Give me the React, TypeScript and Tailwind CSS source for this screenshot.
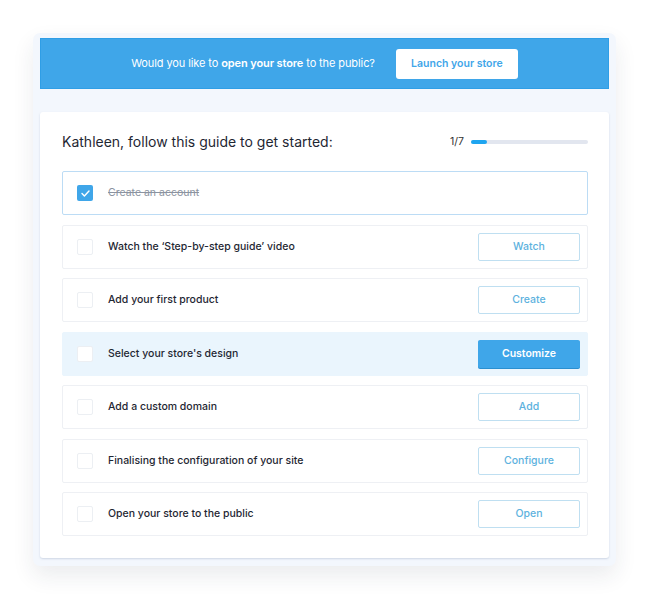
import React from "react";

const rows = [
  { label: "Create an account", done: true },
  { label: "Watch the ‘Step-by-step guide’ video", btn: "Watch" },
  { label: "Add your first product", btn: "Create" },
  { label: "Select your store's design", btn: "Customize", active: true },
  { label: "Add a custom domain", btn: "Add" },
  { label: "Finalising the configuration of your site", btn: "Configure" },
  { label: "Open your store to the public", btn: "Open" },
];

export default function App() {
  return (
    <div className="min-h-[599px] bg-white pt-[33px] pl-[33px]" style={{ fontFamily: "Inter, 'Open Sans', sans-serif" }}>
      <div className="w-[583px] rounded-[7px] bg-[#f3f7fd] px-[7px] pt-[5px] pb-[8px] shadow-[0_10px_22px_rgba(30,40,70,0.09)]">
        <div className="flex h-[51px] items-center justify-center gap-[21px] border border-[#2f9ee6] bg-[#3fa6e9]">
          <p className="text-[11px] tracking-[-0.1px] text-white">
            Would you like to <span className="font-semibold">open your store</span> to the public?
          </p>
          <button className="h-[30px] w-[122px] rounded-[3px] bg-white text-[10.5px] font-semibold text-[#3fa6e9]">
            Launch your store
          </button>
        </div>
        <div className="mt-[23px] rounded-[3px] bg-white pl-[22px] pr-[21px] pb-[22px] shadow-[0_1px_2px_rgba(100,120,160,0.25)]">
          <div className="flex h-[59px] items-center justify-between">
            <h1 className="text-[14px] text-[#1f2733]">Kathleen, follow this guide to get started:</h1>
            <div className="flex items-center gap-[7px]">
              <span className="text-[10.5px] text-[#333]">1/7</span>
              <div className="h-[4px] w-[117px] rounded-full bg-[#e2e6ef]">
                <div className="h-[4px] w-[16px] rounded-full bg-[#1ea5f0]" />
              </div>
            </div>
          </div>
          <div className="flex flex-col gap-[9.5px]">
            {rows.map((r) => (
              <div
                key={r.label}
                className={
                  "flex h-[44px] items-center rounded-[2px] border pl-[14px] pr-[7px] " +
                  (r.done
                    ? "border-[#bcdcf5] bg-white"
                    : r.active
                    ? "border-[#eaf5fd] bg-[#eaf5fd]"
                    : "border-[#eef0f4] bg-white")
                }
              >
                {r.done ? (
                  <div className="flex h-[16px] w-[16px] items-center justify-center rounded-[2px] bg-[#3fa6e9]">
                    <svg width="9" height="7" viewBox="0 0 9 7" fill="none">
                      <path d="M1 3.6 L3.4 6 L8 1" stroke="white" strokeWidth="1.4" strokeLinecap="round" strokeLinejoin="round" />
                    </svg>
                  </div>
                ) : (
                  <div className="h-[16px] w-[16px] rounded-[2px] border border-[#eceff3] bg-white" />
                )}
                <span
                  className={
                    "ml-[15px] flex-1 text-[10.5px] " +
                    (r.done ? "text-[#8b93a0] line-through" : "font-medium text-[#1f2733]")
                  }
                >
                  {r.label}
                </span>
                {r.btn && (
                  <button
                    className={
                      "h-[28px] w-[102px] rounded-[2px] text-[10.5px] " +
                      (r.active
                        ? "bg-[#3fa6e9] font-semibold text-white shadow-[0_1px_0_#2a8fd0]"
                        : "border border-[#bfdff1] bg-white font-medium text-[#5db2de]")
                    }
                  >
                    {r.btn}
                  </button>
                )}
              </div>
            ))}
          </div>
        </div>
      </div>
    </div>
  );
}
